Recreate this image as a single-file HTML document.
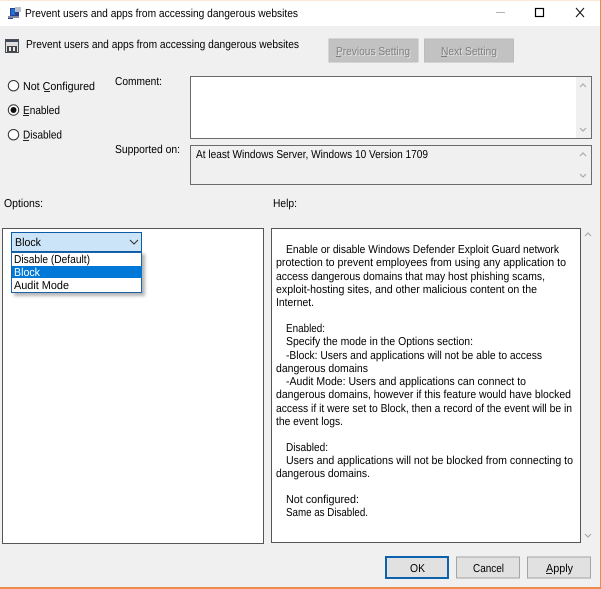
<!DOCTYPE html>
<html><head><meta charset="utf-8"><style>
html,body{margin:0;padding:0;background:#f0f0f0}
svg{display:block}
text{font-family:"Liberation Sans",sans-serif;font-size:11.5px;fill:#000}
</style></head><body>
<svg width="601" height="589" viewBox="0 0 601 589" xmlns="http://www.w3.org/2000/svg" text-rendering="geometricPrecision">
<defs><filter id="b" x="-5%" y="-5%" width="110%" height="110%"><feGaussianBlur stdDeviation="0.35"/></filter>
<filter id="s" x="-10%" y="-10%" width="125%" height="130%"><feGaussianBlur stdDeviation="1.5"/></filter></defs>
<rect width="601" height="589" fill="#f0f0f0"/>
<rect width="601" height="26" fill="#fff"/>
<rect width="601" height="1" fill="#f8e9d8"/>
<g filter="url(#b)">
<!-- title icon -->
<rect x="10" y="8" width="9" height="8" fill="#2c3f8f"/><rect x="11" y="9" width="4" height="6" fill="#1f6fd0"/><rect x="8" y="16" width="11" height="2" fill="#7f8aa0"/><rect x="15" y="7" width="6" height="5" fill="#b9bec9"/><rect x="8" y="18" width="5" height="1" fill="#2c3f8f"/>
<!-- policy icon -->
<rect x="5.500" y="39.500" width="13" height="13" fill="#dedede" stroke="#4a4f58"/><rect x="6" y="40" width="12" height="2" fill="#3f4a5a"/><rect x="7" y="46" width="10" height="6" fill="#444"/><rect x="9" y="47" width="2" height="4" fill="#e8e8e8"/><rect x="13" y="47" width="2" height="4" fill="#e8e8e8"/>
<!-- window controls -->
<rect x="496" y="12" width="9" height="1" fill="#b0b0b0"/>
<rect x="535.500" y="8.500" width="8" height="8" fill="none" stroke="#000" stroke-width="1.2"/>
<path d="M576 8 L584 17 M584 8 L576 17" stroke="#111" fill="none"/>
<text x="25" y="17" textLength="273" lengthAdjust="spacingAndGlyphs">Prevent users and apps from accessing dangerous websites</text>
<text x="26" y="48" textLength="273" lengthAdjust="spacingAndGlyphs">Prevent users and apps from accessing dangerous websites</text>
<!-- nav buttons -->
<rect x="329" y="39" width="89" height="23" fill="#c2c2c2" stroke="#bcbcbc"/>
<rect x="424.500" y="39" width="89" height="23" fill="#c2c2c2" stroke="#bcbcbc"/>
<text x="337" y="56" textLength="74" lengthAdjust="spacingAndGlyphs" style="fill:#e4e4e4">Previous Setting</text>
<text x="442" y="56" textLength="56" lengthAdjust="spacingAndGlyphs" style="fill:#e4e4e4">Next Setting</text>
<text x="336" y="55" textLength="74" lengthAdjust="spacingAndGlyphs" style="fill:#808080">Previous Setting</text>
<text x="441" y="55" textLength="56" lengthAdjust="spacingAndGlyphs" style="fill:#808080">Next Setting</text>
<rect x="336" y="56" width="5" height="1" fill="#808080"/><rect x="441" y="56" width="6" height="1" fill="#808080"/>
<!-- radios -->
<circle cx="13.500" cy="85.700" r="5.200" fill="#fff" stroke="#333"/>
<circle cx="13.500" cy="110" r="5.200" fill="#fff" stroke="#333"/><circle cx="13.500" cy="110" r="3" fill="#111"/>
<circle cx="13.500" cy="134.700" r="5.200" fill="#fff" stroke="#333"/>
<text x="23" y="90" textLength="72" lengthAdjust="spacingAndGlyphs">Not Configured</text>
<text x="23" y="114" textLength="37" lengthAdjust="spacingAndGlyphs">Enabled</text>
<text x="23" y="138.500" textLength="39" lengthAdjust="spacingAndGlyphs">Disabled</text>
<rect x="44" y="91" width="6" height="1" fill="#222"/><rect x="23" y="115" width="6" height="1" fill="#222"/><rect x="23" y="140" width="6" height="1" fill="#222"/>
<text x="115" y="85" textLength="47" lengthAdjust="spacingAndGlyphs">Comment:</text>
<text x="115" y="153" textLength="65" lengthAdjust="spacingAndGlyphs">Supported on:</text>
<text x="4" y="207" textLength="39" lengthAdjust="spacingAndGlyphs">Options:</text>
<text x="273" y="207" textLength="24" lengthAdjust="spacingAndGlyphs">Help:</text>
<!-- comment box -->
<rect x="190.500" y="76.500" width="401" height="62" fill="#fff" stroke="#6a6a6a"/>
<rect x="576" y="77" width="15" height="61" fill="#f0f0f0"/>
<path d="M580 87 L583 84 L586 87" fill="none" stroke="#aaa" stroke-width="1.2"/>
<path d="M580 128 L583 131 L586 128" fill="none" stroke="#aaa" stroke-width="1.2"/>
<!-- supported box -->
<rect x="190.500" y="145.500" width="401" height="39" fill="#f0f0f0" stroke="#6a6a6a"/>
<text x="196" y="158" textLength="232" lengthAdjust="spacingAndGlyphs">At least Windows Server, Windows 10 Version 1709</text>
<path d="M580 156 L583 153 L586 156" fill="none" stroke="#aaa" stroke-width="1.2"/>
<path d="M580 174 L583 177 L586 174" fill="none" stroke="#aaa" stroke-width="1.2"/>
<!-- panels -->
<rect x="2.500" y="228.500" width="261" height="315" fill="#fff" stroke="#555"/>
<rect x="271.500" y="228.500" width="309" height="314" fill="#fff" stroke="#555"/>
<path d="M585 236 L588 233 L591 236" fill="none" stroke="#aaa" stroke-width="1.2"/>
<path d="M585 534 L588 537 L591 534" fill="none" stroke="#aaa" stroke-width="1.2"/>
<!-- combo -->
<rect x="14" y="254" width="131" height="42" fill="#777" opacity=".55" filter="url(#s)"/>
<rect x="11.500" y="232.500" width="130" height="19" fill="#cce4f7" stroke="#0f5ca5"/>
<text x="15" y="246" textLength="26" lengthAdjust="spacingAndGlyphs">Block</text>
<path d="M130 240 L134 244 L138 240" fill="none" stroke="#333" stroke-width="1.1"/>
<rect x="11.500" y="252.500" width="130" height="40" fill="#fff" stroke="#1a62a8"/>
<rect x="12" y="266" width="130" height="12" fill="#0078d7"/>
<text x="14" y="263" textLength="76" lengthAdjust="spacingAndGlyphs">Disable (Default)</text>
<text x="14" y="276" textLength="26" lengthAdjust="spacingAndGlyphs" style="fill:#fff">Block</text>
<text x="14" y="289" textLength="55" lengthAdjust="spacingAndGlyphs">Audit Mode</text>
<!-- help text -->
<text x="286" y="253" textLength="273" lengthAdjust="spacingAndGlyphs">Enable or disable Windows Defender Exploit Guard network</text>
<text x="276" y="266" textLength="290" lengthAdjust="spacingAndGlyphs">protection to prevent employees from using any application to</text>
<text x="276" y="280" textLength="269" lengthAdjust="spacingAndGlyphs">access dangerous domains that may host phishing scams,</text>
<text x="276" y="293" textLength="261" lengthAdjust="spacingAndGlyphs">exploit-hosting sites, and other malicious content on the</text>
<text x="276" y="306" textLength="38" lengthAdjust="spacingAndGlyphs">Internet.</text>
<text x="286" y="332" textLength="39" lengthAdjust="spacingAndGlyphs">Enabled:</text>
<text x="286" y="345" textLength="187" lengthAdjust="spacingAndGlyphs">Specify the mode in the Options section:</text>
<text x="286" y="359" textLength="256" lengthAdjust="spacingAndGlyphs">-Block: Users and applications will not be able to access</text>
<text x="276" y="372" textLength="92" lengthAdjust="spacingAndGlyphs">dangerous domains</text>
<text x="286" y="385" textLength="240" lengthAdjust="spacingAndGlyphs">-Audit Mode: Users and applications can connect to</text>
<text x="276" y="398" textLength="295" lengthAdjust="spacingAndGlyphs">dangerous domains, however if this feature would have blocked</text>
<text x="276" y="412" textLength="296" lengthAdjust="spacingAndGlyphs">access if it were set to Block, then a record of the event will be in</text>
<text x="276" y="425" textLength="67" lengthAdjust="spacingAndGlyphs">the event logs.</text>
<text x="286" y="451" textLength="42" lengthAdjust="spacingAndGlyphs">Disabled:</text>
<text x="286" y="464" textLength="287" lengthAdjust="spacingAndGlyphs">Users and applications will not be blocked from connecting to</text>
<text x="276" y="477" textLength="94" lengthAdjust="spacingAndGlyphs">dangerous domains.</text>
<text x="286" y="503" textLength="73" lengthAdjust="spacingAndGlyphs">Not configured:</text>
<text x="286" y="516" textLength="82" lengthAdjust="spacingAndGlyphs">Same as Disabled.</text>
<!-- bottom buttons -->
<rect x="386" y="557" width="62" height="21" fill="#e1e1e1" stroke="#0f62ad" stroke-width="2"/>
<rect x="456.500" y="557" width="63" height="21" fill="#e1e1e1" stroke="#a5a5a5"/>
<rect x="527.500" y="557" width="63" height="21" fill="#e1e1e1" stroke="#a5a5a5"/>
<text x="410" y="572" textLength="15" lengthAdjust="spacingAndGlyphs">OK</text>
<text x="473" y="572" textLength="31" lengthAdjust="spacingAndGlyphs">Cancel</text>
<text x="546" y="572" textLength="27" lengthAdjust="spacingAndGlyphs">Apply</text>
<rect x="546" y="573" width="6" height="1" fill="#222"/>
</g>
<rect x="600" width="1" height="589" fill="#ef8a4e"/>
<rect y="587" width="601" height="2" fill="#ef8a4e"/>
</svg>
</body></html>
